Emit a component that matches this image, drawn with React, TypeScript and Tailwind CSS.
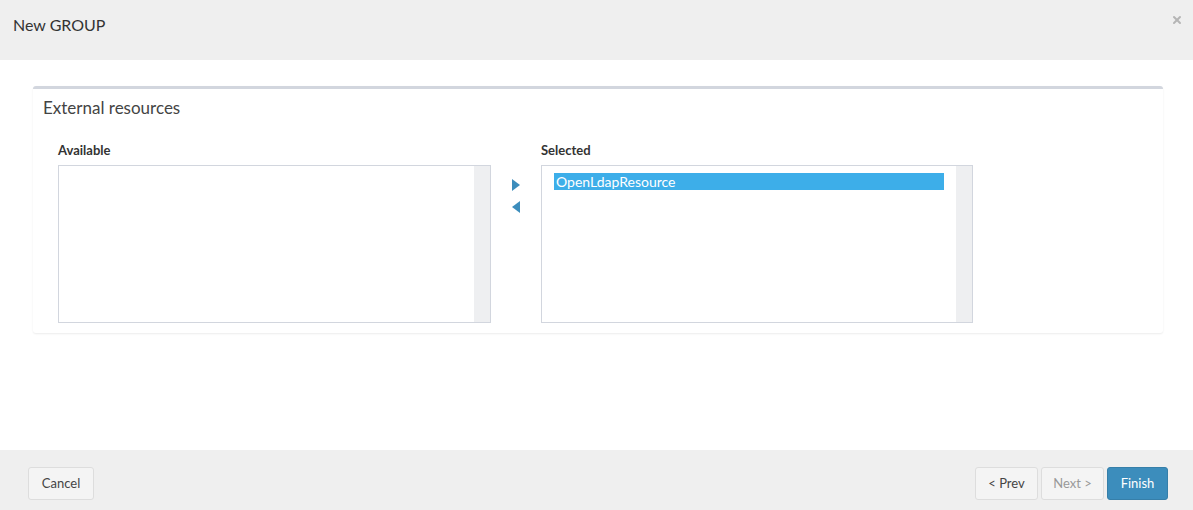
import { X } from 'lucide-react';

const font = { fontFamily: '"Source Sans Pro", Lato, "Noto Sans", sans-serif' };

function ListBox({ items, selected }: { items: string[]; selected?: string }) {
  return (
    <div className="flex h-[158px] border border-[#d2d6de] bg-white">
      <div className="flex-1 pl-3 pr-3 pt-[7px]">
        {items.map((item) => (
          <div
            key={item}
            className={`h-[17px] px-[2px] text-[14px] leading-[17px] ${
              item === selected ? 'bg-[#3daee9] text-white' : 'text-[#333]'
            }`}
          >
            {item}
          </div>
        ))}
      </div>
      <div className="w-[16px] bg-[#eeeff1]" />
    </div>
  );
}

export default function App() {
  return (
    <div className="flex h-[510px] w-[1193px] flex-col bg-white text-[#333]" style={font}>
      {/* Header */}
      <div className="flex h-[60px] items-start justify-between bg-[#efefef] pl-[13px] pr-[10px]">
        <h4 className="mt-[13px] text-[16px] leading-[24px] text-[#333]">New GROUP</h4>
        <button className="mt-[14px] text-[#b5b5b5]" aria-label="Close">
          <X size={12} strokeWidth={4} />
        </button>
      </div>

      {/* Body */}
      <div className="flex-1 pl-[33px] pr-[30px] pt-[26px]">
        <div className="rounded-[3px] border-t-[3px] border-[#d2d6de] bg-white shadow-[0_1px_2px_rgba(0,0,0,0.08)] pb-[10px]">
          <div className="px-[10px] pt-[8px] pb-[10px] text-[17px] leading-[22px] text-[#444]">External resources</div>
          <div className="flex px-[25px] pt-[12px]">
            <div className="w-[433px]">
              <div className="mb-[6px] text-[13px] font-bold leading-[18px] text-[#333]">Available</div>
              <ListBox items={[]} />
            </div>
            <div className="flex w-[50px] flex-col items-center pt-[38px]">
              <svg width="8" height="12" viewBox="0 0 8 12" className="mb-[10px]">
                <path d="M0 0 L8 6 L0 12 Z" fill="#3c8dbc" />
              </svg>
              <svg width="8" height="12" viewBox="0 0 8 12">
                <path d="M8 0 L0 6 L8 12 Z" fill="#3c8dbc" />
              </svg>
            </div>
            <div className="w-[432px]">
              <div className="mb-[6px] text-[13px] font-bold leading-[18px] text-[#333]">Selected</div>
              <ListBox items={['OpenLdapResource']} selected="OpenLdapResource" />
            </div>
          </div>
        </div>
      </div>

      {/* Footer */}
      <div className="flex h-[60px] items-start justify-between bg-[#efefef] pl-[28px] pr-[25px] pt-[17px]">
        <button className="h-[33px] w-[66px] rounded-[3px] border border-[#ddd] bg-[#f4f4f4] text-[13px] text-[#444]">
          Cancel
        </button>
        <div className="flex gap-[3px]">
          <button className="h-[33px] w-[63px] rounded-[3px] border border-[#ddd] bg-[#f4f4f4] text-[13px] text-[#444]">
            &lt; Prev
          </button>
          <button className="h-[33px] w-[63px] rounded-[3px] border border-[#ddd] bg-[#f4f4f4] text-[13px] text-[#999]">
            Next &gt;
          </button>
          <button className="h-[33px] w-[61px] rounded-[3px] border border-[#367fa9] bg-[#3c8dbc] text-[13px] text-white">
            Finish
          </button>
        </div>
      </div>
    </div>
  );
}
